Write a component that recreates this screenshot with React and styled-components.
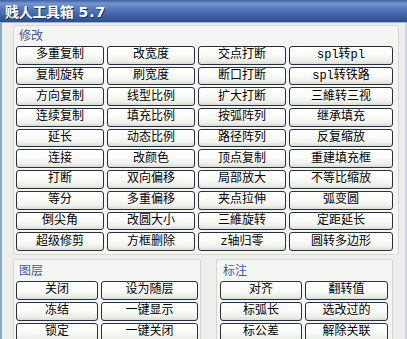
import React from 'react';
import styled, { createGlobalStyle } from 'styled-components';

const GlobalStyle = createGlobalStyle`
  html, body {
    margin: 0;
    padding: 0;
    background: #ffffff;
  }
`;

const Window = styled.div`
  width: 407px;
  height: 339px;
  overflow: hidden;
  background: #eeeeec;
  font-family: "Noto Sans CJK SC", "DejaVu Sans", sans-serif;
  display: flex;
  flex-direction: column;
`;

const TitleBar = styled.div`
  height: 22px;
  flex: none;
  display: flex;
  align-items: center;
  padding-left: 5px;
  background: linear-gradient(
    to bottom,
    #3f62a2 0%,
    #7594cf 16%,
    #5577b8 42%,
    #3b5d9f 78%,
    #2c4e8d 100%
  );
  border-bottom: 1px solid #9db2da;
`;

const Title = styled.div`
  color: #ffffff;
  font-size: 14px;
  font-weight: bold;
  line-height: 16px;
  letter-spacing: -0.3px;
  text-shadow: 1px 1px 0 #1d3566;
`;

const Version = styled.span`
  margin-left: 5px;
  letter-spacing: 1px;
  font-family: "DejaVu Sans", sans-serif;
`;

const Body = styled.div`
  flex: 1;
  border-left: 2px solid #8ea6d2;
  border-right: 2px solid #c8d2e4;
  padding: 2px 0 0 11px;
`;

const Group = styled.div`
  width: ${p => p.$width}px;
  box-sizing: border-box;
  border: 1px solid #d6d6d2;
  border-radius: 2px;
  background: #f5f5f3;
  padding: 0 ${p => p.$pad}px 3px;
`;

const GroupLabel = styled.div`
  height: ${p => p.$h}px;
  box-sizing: border-box;
  padding: ${p => p.$top}px 0 0 3px;
  font-size: 12px;
  line-height: 13px;
  color: #3d5a98;
`;

const ButtonGrid = styled.div`
  display: grid;
  grid-template-columns: ${p => p.$cols};
  grid-auto-rows: ${p => p.$rowH}px;
  column-gap: 3px;
  row-gap: 2px;
`;

const Btn = styled.div`
  box-sizing: border-box;
  border: 1px solid #27303d;
  border-radius: 3px;
  background: linear-gradient(to bottom, #ffffff 0%, #fbfbf9 45%, #efefeb 80%, #dcdcd6 100%);
  display: flex;
  align-items: center;
  justify-content: center;
  font-family: "Liberation Mono", "Noto Sans CJK SC", monospace;
  font-size: 12px;
  line-height: 14px;
  color: #000000;
  white-space: nowrap;
`;

const LowerRow = styled.div`
  display: flex;
  gap: 15px;
  margin-top: 4px;
`;

const modify = [
  '多重复制', '改宽度', '交点打断', 'spl转pl',
  '复制旋转', '刷宽度', '断口打断', 'spl转铁路',
  '方向复制', '线型比例', '扩大打断', '三維转三视',
  '连续复制', '填充比例', '按弧阵列', '继承填充',
  '延长', '动态比例', '路径阵列', '反复缩放',
  '连接', '改颜色', '顶点复制', '重建填充框',
  '打断', '双向偏移', '局部放大', '不等比缩放',
  '等分', '多重偏移', '夹点拉伸', '弧变圆',
  '倒尖角', '改圆大小', '三維旋转', '定距延长',
  '超级修剪', '方框删除', 'z轴归零', '圆转多边形',
];

const layer = ['关闭', '设为随层', '冻结', '一键显示', '锁定', '一键关闭'];
const dim = ['对齐', '翻转值', '标弧长', '选改过的', '标公差', '解除关联'];

const App = () => (
  <>
    <GlobalStyle />
    <Window>
      <TitleBar>
        <Title>贱人工具箱<Version>5.7</Version></Title>
      </TitleBar>
      <Body>
        <Group $width={386} $pad={2}>
          <GroupLabel $h={20} $top={2}>修改</GroupLabel>
          <ButtonGrid $cols="88px 88px 88px 104px" $rowH={18.7}>
            {modify.map(t => <Btn key={t}>{t}</Btn>)}
          </ButtonGrid>
        </Group>
        <LowerRow>
          <Group $width={188} $pad={2}>
            <GroupLabel $h={21} $top={3}>图层</GroupLabel>
            <ButtonGrid $cols="82px 97px" $rowH={19}>
              {layer.map(t => <Btn key={t}>{t}</Btn>)}
            </ButtonGrid>
          </Group>
          <Group $width={177} $pad={3}>
            <GroupLabel $h={21} $top={3}>标注</GroupLabel>
            <ButtonGrid $cols="82px 83px" $rowH={19}>
              {dim.map(t => <Btn key={t}>{t}</Btn>)}
            </ButtonGrid>
          </Group>
        </LowerRow>
      </Body>
    </Window>
  </>
);

export default App;
